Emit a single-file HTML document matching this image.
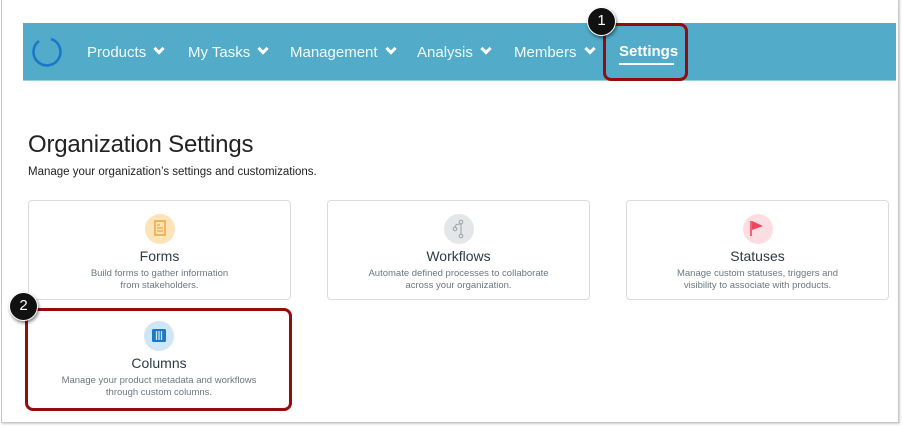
<!DOCTYPE html>
<html><head><meta charset="utf-8"><style>
*{margin:0;padding:0;box-sizing:border-box}
body{width:903px;height:427px;background:#fff;font-family:"Liberation Sans",sans-serif;position:relative;overflow:hidden}
.frame{position:absolute;left:1px;top:-2px;width:898px;height:425px;border:1px solid #c8c8c8;box-shadow:1px 1px 2px rgba(0,0,0,.2)}
.nav{position:absolute;left:23px;top:23px;width:873px;height:58px;background:#51abc9;border-bottom:1px solid #9fd0e0}
.ni{position:absolute;top:21px;color:#f4fafc;font-size:15px;white-space:nowrap}
.chev{display:inline-block;width:8px;height:8px;border-right:3px solid #fff;border-bottom:3px solid #fff;transform:rotate(45deg);margin-left:9px;position:relative;top:-4px}
.set{position:absolute;left:619px;top:43px;color:#fff;font-size:15px;font-weight:bold}
.uline{position:absolute;left:619px;top:63px;width:55px;height:2px;background:#fff}
.rbox{position:absolute;border:3px solid #950c0c;border-radius:8px}
.badge{position:absolute;width:29px;height:29px;border-radius:50%;background:#111;border:1.5px solid #fff;color:#fff;font-size:15px;text-align:center;line-height:26px;box-shadow:1px 2px 3px rgba(0,0,0,.5)}
h1{position:absolute;left:28px;top:131px;font-size:24px;font-weight:normal;color:#222;letter-spacing:-.2px}
.sub{position:absolute;left:28px;top:166px;font-size:11.5px;color:#222}
.card{position:absolute;width:263px;height:100px;border:1px solid #d9dcdf;border-radius:4px;text-align:center}
.ic{width:30px;height:30px;border-radius:50%;margin:13px auto 0;position:relative}
.ct{font-size:14px;color:#2d3b45;margin-top:4px}
.cd{font-size:9.5px;color:#6b7780;line-height:12px;margin-top:4px}
</style></head><body>
<div class="frame"></div>
<div class="nav">
<svg style="position:absolute;left:6px;top:11px" width="36" height="36" viewBox="0 0 36 36"><path d="M22 5 A13.5 13.5 0 1 1 10 7" fill="none" stroke="#1a78c8" stroke-width="2.6"/></svg>
<div class="ni" style="left:64px">Products<span class="chev"></span></div>
<div class="ni" style="left:165px">My Tasks<span class="chev"></span></div>
<div class="ni" style="left:267px">Management<span class="chev"></span></div>
<div class="ni" style="left:394px">Analysis<span class="chev"></span></div>
<div class="ni" style="left:491px">Members<span class="chev"></span></div>
</div>
<div class="set">Settings</div>
<div class="uline"></div>
<div class="rbox" style="left:603px;top:23px;width:85px;height:58px"></div>
<div class="badge" style="left:587px;top:7px">1</div>
<h1>Organization Settings</h1>
<div class="sub">Manage your organization’s settings and customizations.</div>
<div class="card" style="left:28px;top:200px">
<div class="ic" style="background:#fde3b8"><svg width="30" height="30"><rect x="10" y="7" width="10" height="14" fill="none" stroke="#f2a63a" stroke-width="1.5"/><path d="M12 11h3M12 14h6M12 17h6" stroke="#f2a63a" stroke-width="1.3"/></svg></div>
<div class="ct">Forms</div><div class="cd">Build forms to gather information<br>from stakeholders.</div></div>
<div class="card" style="left:327px;top:200px">
<div class="ic" style="background:#e4e6e8"><svg width="30" height="30"><circle cx="17" cy="8" r="1.8" fill="none" stroke="#9aa1a7"/><circle cx="11" cy="15" r="1.8" fill="none" stroke="#9aa1a7"/><circle cx="17" cy="22" r="1.8" fill="none" stroke="#9aa1a7"/><path d="M17 10v10M11 13q0-3 6-3" fill="none" stroke="#9aa1a7"/></svg></div>
<div class="ct">Workflows</div><div class="cd">Automate defined processes to collaborate<br>across your organization.</div></div>
<div class="card" style="left:626px;top:200px">
<div class="ic" style="background:#fcdde1"><svg width="30" height="30"><path d="M8 7v15" stroke="#f0455c" stroke-width="1.6"/><path d="M9 7l11 5-11 4z" fill="#f0455c"/></svg></div>
<div class="ct">Statuses</div><div class="cd">Manage custom statuses, triggers and<br>visibility to associate with products.</div></div>
<div class="card" style="left:28px;top:312px;height:96px;width:262px;border:none">
<div class="ic" style="background:#cfe6f7;margin-top:9px"><svg width="30" height="30"><rect x="8" y="8" width="14" height="13" rx="1.5" fill="#1a78c8"/><path d="M12.5 10v9M15 10v9M17.5 10v9" stroke="#cfe6f7" stroke-width="1.3"/></svg></div>
<div class="ct" style="margin-top:4px">Columns</div><div class="cd">Manage your product metadata and workflows<br>through custom columns.</div></div>
<div class="rbox" style="left:25px;top:308px;width:267px;height:103px"></div>
<div class="badge" style="left:9px;top:292px">2</div>
</body></html>
